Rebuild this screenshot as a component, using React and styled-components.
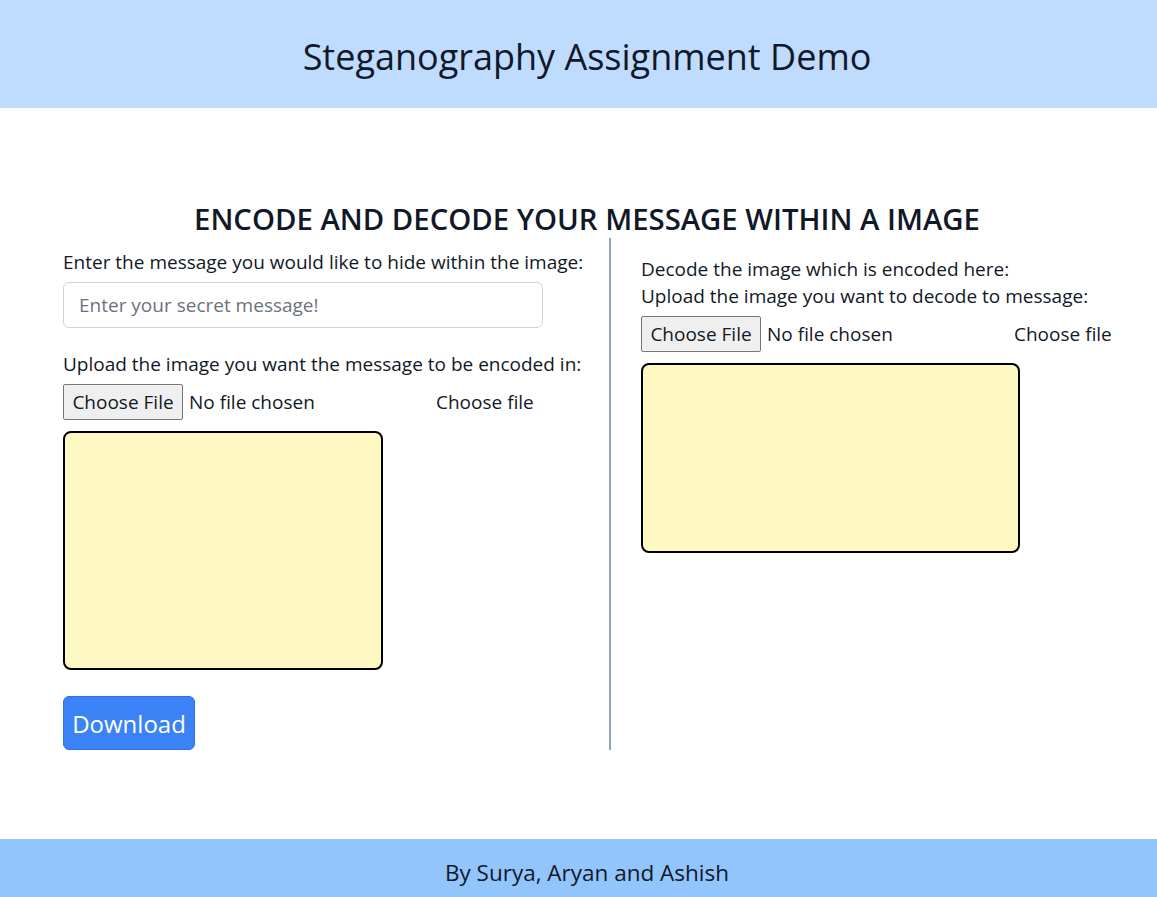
import React from 'react';
import styled, {createGlobalStyle} from 'styled-components';

const GlobalStyle = createGlobalStyle`
  * { box-sizing: border-box; }
  body {
    margin: 0;
    font-family: "Open Sans", "Noto Sans", sans-serif;
    color: #111827;
    background: #ffffff;
  }
`

const Page = styled.div`
  min-height: 897px;
  display: flex;
  flex-direction: column;
`

const Header = styled.header`
  height: 108px;
  padding: 5px 0 0 17px;
  background: #bfdbfe;
  display: flex;
  align-items: center;
  justify-content: center;
`

const Title = styled.h1`
  margin: 0;
  font-size: 36px;
  font-weight: 400;
  color: #111827;
`

const Main = styled.main`
  flex: 1;
  padding: 95px 63px 0 63px;
`

const Heading = styled.h2`
  margin: 0;
  padding-left: 17px;
  height: 35px;
  line-height: 32px;
  text-align: center;
  font-size: 29.3px;
  font-weight: 600;
  color: #111827;
`

const Columns = styled.div`
  display: flex;
`

const Column = styled.section`
  display: flex;
  flex-direction: column;
  align-items: flex-start;
  ${props => props.divided ? `
    flex: 1;
    min-width: 0;
    border-left: 2px solid #94a3b8;
    padding: 18px 0 0 30px;
  ` : `
    flex: 0 0 546px;
    padding-top: 11px;
  `}
`

const Label = styled.label`
  font-size: 19px;
  line-height: 27px;
  white-space: nowrap;
  margin-top: ${props => props.gap || 0}px;
`

const TextInput = styled.input`
  margin-top: 6px;
  width: 480px;
  height: 46px;
  border: 1px solid #d1d5db;
  border-radius: 6px;
  padding: 0 15px;
  font-family: inherit;
  font-size: 19px;
  color: #111827;
  &::placeholder {
    color: #6b7280;
  }
`

const FileRow = styled.div`
  margin-top: 6px;
  display: flex;
  align-items: center;
  height: 36px;
`

const FileInput = styled.input`
  width: 373px;
  font-family: inherit;
  font-size: 19px;
  color: #111827;
  &::file-selector-button {
    height: 36px;
    width: 120px;
    margin-right: 6px;
    padding: 0;
    border: 1px solid #767676;
    border-radius: 2px;
    background: #efefef;
    font-family: inherit;
    font-size: 19px;
    color: #111827;
  }
`

const FileHint = styled.span`
  font-size: 19px;
  white-space: nowrap;
`

const Preview = styled.div`
  margin-top: 11px;
  width: ${props => props.w}px;
  height: ${props => props.h}px;
  background: #fef9c3;
  border: 2px solid #000000;
  border-radius: 8px;
`

const DownloadButton = styled.button`
  margin-top: 26px;
  height: 54px;
  width: 132px;
  padding: 0;
  background: #3b82f6;
  border: 1px solid #2f74e6;
  border-radius: 6px;
  color: #ffffff;
  font-family: inherit;
  font-size: 24px;
  cursor: pointer;
`

const Footer = styled.footer`
  height: 58px;
  padding: 8px 0 0 17px;
  background: #93c5fd;
  display: flex;
  align-items: center;
  justify-content: center;
  font-size: 22.5px;
  color: #111827;
`

function App() {
  return (
    <Page>
      <GlobalStyle/>
      <Header>
        <Title>Steganography Assignment Demo</Title>
      </Header>
      <Main>
        <Heading>ENCODE AND DECODE YOUR MESSAGE WITHIN A IMAGE</Heading>
        <Columns>
          <Column>
            <Label>Enter the message you would like to hide within the image:</Label>
            <TextInput type="text" placeholder="Enter your secret message!"/>
            <Label gap={23}>Upload the image you want the message to be encoded in:</Label>
            <FileRow>
              <FileInput type="file"/>
              <FileHint>Choose file</FileHint>
            </FileRow>
            <Preview w={320} h={239}/>
            <DownloadButton>Download</DownloadButton>
          </Column>
          <Column divided>
            <Label>Decode the image which is encoded here:</Label>
            <Label>Upload the image you want to decode to message:</Label>
            <FileRow>
              <FileInput type="file"/>
              <FileHint>Choose file</FileHint>
            </FileRow>
            <Preview w={379} h={190}/>
          </Column>
        </Columns>
      </Main>
      <Footer>By Surya, Aryan and Ashish</Footer>
    </Page>
  )
}

export default App
